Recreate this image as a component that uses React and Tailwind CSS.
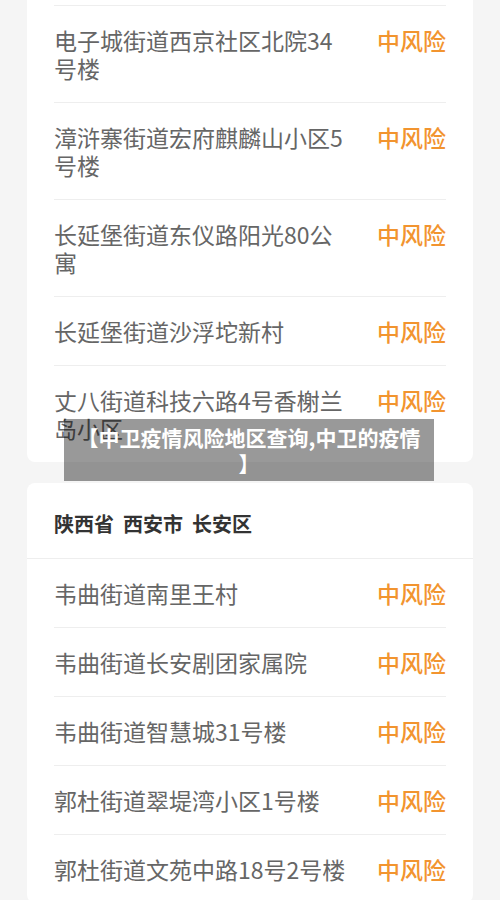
import React from 'react';

const firstCard = [
  '电子城街道西京社区北院34号楼',
  '漳浒寨街道宏府麒麟山小区5号楼',
  '长延堡街道东仪路阳光80公寓',
  '长延堡街道沙浮坨新村',
  '丈八街道科技六路4号香榭兰岛小区',
];

const secondCard = [
  '韦曲街道南里王村',
  '韦曲街道长安剧团家属院',
  '韦曲街道智慧城31号楼',
  '郭杜街道翠堤湾小区1号楼',
  '郭杜街道文苑中路18号2号楼',
];

const Row = ({ name, first }) => (
  <div
    className={`flex justify-between items-start py-5 ${
      first ? '' : 'border-t border-[#eeeeee]'
    }`}
  >
    <div className="w-[296px] text-[23px] leading-[28px] text-[#666666]">{name}</div>
    <div className="text-[23px] leading-[28px] font-medium text-[#f2942f] whitespace-nowrap">中风险</div>
  </div>
);

export default function App() {
  return (
    <div
      className="relative min-h-[900px] bg-[#f5f5f5] px-[27px] pb-6"
      style={{ fontFamily: '"Noto Sans CJK SC", "Noto Sans", sans-serif' }}
    >
      {/* card scrolled partly off the top */}
      <div className="bg-white rounded-b-lg px-[27px] pt-[5px]">
        {firstCard.map((name) => (
          <Row key={name} name={name} />
        ))}
      </div>

      <div className="mt-[21px] bg-white rounded-lg">
        <div className="flex gap-[9px] px-[27px] pt-[27px] pb-5 border-b border-[#eeeeee] text-[20px] leading-[28px] font-bold text-[#333333]">
          <span>陕西省</span>
          <span>西安市</span>
          <span>长安区</span>
        </div>
        <div className="px-[27px]">
          {secondCard.map((name, i) => (
            <Row key={name} name={name} first={i === 0} />
          ))}
        </div>
      </div>

      {/* title overlay */}
      <div className="absolute left-[64px] top-[419px] w-[370px] h-[62px] bg-black/40 flex items-center justify-center">
        <p className="text-white font-bold text-[21px] leading-[26px] text-center whitespace-nowrap">
          【中卫疫情风险地区查询,中卫的疫情
          <br />】
        </p>
      </div>
    </div>
  );
}
